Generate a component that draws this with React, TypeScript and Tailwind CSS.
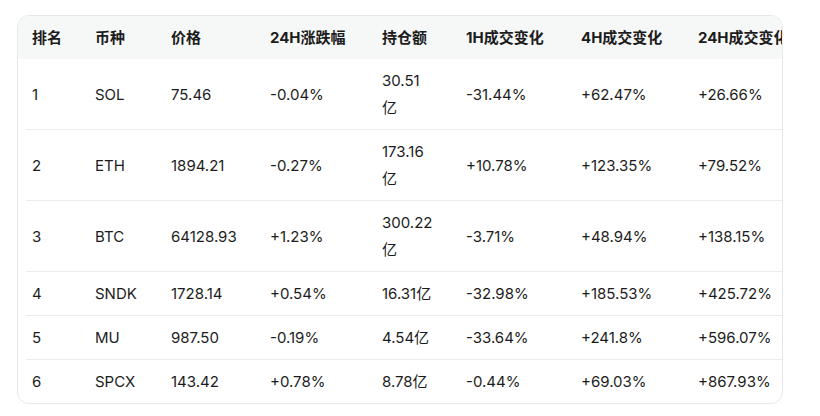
import React from "react";

const rows: string[][] = [
  ["1", "SOL", "75.46", "-0.04%", "30.51\n亿", "-31.44%", "+62.47%", "+26.66%"],
  ["2", "ETH", "1894.21", "-0.27%", "173.16\n亿", "+10.78%", "+123.35%", "+79.52%"],
  ["3", "BTC", "64128.93", "+1.23%", "300.22\n亿", "-3.71%", "+48.94%", "+138.15%"],
  ["4", "SNDK", "1728.14", "+0.54%", "16.31亿", "-32.98%", "+185.53%", "+425.72%"],
  ["5", "MU", "987.50", "-0.19%", "4.54亿", "-33.64%", "+241.8%", "+596.07%"],
  ["6", "SPCX", "143.42", "+0.78%", "8.78亿", "-0.44%", "+69.03%", "+867.93%"],
];

const headers = ["排名", "币种", "价格", "24H涨跌幅", "持仓额", "1H成交变化", "4H成交变化", "24H成交变化"];

export default function App() {
  return (
    <div
      className="w-[820px] h-[416px] bg-white pt-[15px] pl-[17px] text-[#1c1c1c]"
      style={{ fontFamily: 'Inter, "Noto Sans CJK SC", sans-serif' }}
    >
      <div className="w-[766px] border border-[#e6e8e8] rounded-[12px] overflow-hidden text-[15px]">
        <div className="grid grid-cols-[63px_76px_99px_112px_84px_115px_117px_140px] bg-[#f6f7f7] font-bold leading-[27px]">
          {headers.map((h) => (
            <div key={h} className="pl-[14px] py-2 whitespace-nowrap">
              {h}
            </div>
          ))}
        </div>
        {rows.map((r, i) => (
          <div
            key={i}
            className={`ml-2 grid grid-cols-[55px_76px_99px_112px_84px_115px_117px_140px] items-center leading-[27px] ${
              i < rows.length - 1 ? "border-b border-[#ececec]" : ""
            }`}
          >
            {r.map((c, j) => (
              <div key={j} className={`py-2 whitespace-nowrap ${j === 0 ? "pl-[6px]" : "pl-[14px]"}`}>
                {c.split("\n").map((line, k) => (
                  <div key={k}>{line}</div>
                ))}
              </div>
            ))}
          </div>
        ))}
      </div>
    </div>
  );
}
